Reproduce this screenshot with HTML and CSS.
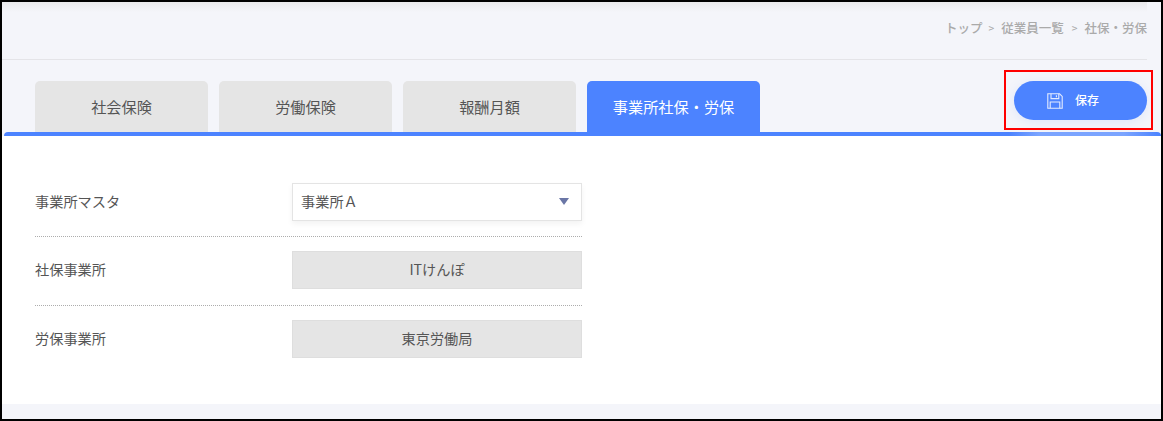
FILE: index.html
```html
<!DOCTYPE html>
<html lang="ja">
<head>
<meta charset="utf-8">
<title>事業所社保・労保</title>
<link rel="stylesheet" href="styles.css">
</head>
<body>
<div class="frame">
  <nav class="crumbs">
    <span>トップ</span><span class="sep">&gt;</span><span>従業員一覧</span><span class="sep">&gt;</span><span>社保・労保</span>
  </nav>
  <div class="toolbar">
    <div class="tabs">
      <div class="tab">社会保険</div>
      <div class="tab">労働保険</div>
      <div class="tab">報酬月額</div>
      <div class="tab active">事業所社保・労保</div>
    </div>
    <div class="save-wrap">
      <button class="save" type="button">
        <svg class="save-icon" width="16" height="16" viewBox="0 0 16 16" fill="none" stroke="#e3ebff" stroke-width="1.1">
          <path d="M.8.8H12.6L15.2 3.4V15.2H.8Z"/>
          <path d="M4 .8V5.6H11.8V.8"/>
          <path d="M9.4 2.2V4.2"/>
          <path d="M3.2 15.2V9H12.8V15.2"/>
        </svg>
        <span>保存</span>
      </button>
    </div>
  </div>
  <div class="bar"></div>
  <main class="panel">
    <div class="row">
      <div class="label">事業所マスタ</div>
      <div class="select"><span>事業所Ａ</span><i class="caret"></i></div>
    </div>
    <div class="row">
      <div class="label">社保事業所</div>
      <div class="field">ITけんぽ</div>
    </div>
    <div class="row">
      <div class="label">労保事業所</div>
      <div class="field">東京労働局</div>
    </div>
  </main>
</div>
</body>
</html>
```
FILE: styles.css
```css
* { box-sizing: border-box; }
html, body { margin: 0; padding: 0; }
body {
  width: 1163px;
  height: 421px;
  overflow: hidden;
  font-family: "Noto Sans CJK JP", "Noto Sans", sans-serif;
  color: #555;
}
.frame {
  width: 1163px;
  height: 421px;
  border: 2px solid #000;
  background: #f4f5fa;
  display: flex;
  flex-direction: column;
}
.crumbs {
  height: 58px;
  margin-right: 14px;
  padding-top: 17px;
  border-bottom: 1px solid #e4e4e8;
  display: flex;
  justify-content: flex-end;
  font-size: 12.5px;
  font-weight: 500;
  line-height: 18px;
  color: #aaa;
  background: linear-gradient(#e9e9ec 0, #f4f5fa 10px);
}
.sep { margin: 0 7px 0 6px; font-size: 10px; }
.sep + span + .sep { margin-left: 8px; }
.toolbar {
  height: 72px;
  padding: 21px 14px 0 33px;
  display: flex;
  justify-content: space-between;
}
.tabs { display: flex; gap: 11px; }
.tab {
  width: 173px;
  height: 51px;
  padding-bottom: 2px;
  background: #e5e5e5;
  border-radius: 5px 5px 0 0;
  display: flex;
  align-items: center;
  justify-content: center;
  font-size: 15.2px;
  color: #555;
}
.tab.active { background: #4c83ff; color: #fff; }
.save-wrap { position: relative; }
.save-wrap::after {
  content: "";
  position: absolute;
  left: -10px;
  right: -6px;
  top: -11px;
  height: 56px;
  border: 2px solid #f00;
  pointer-events: none;
}
.save {
  width: 133px;
  height: 39px;
  padding: 0 0 2px 33px;
  border: 0;
  border-radius: 20px;
  background: #4c83ff;
  color: #fff;
  font: 500 12px "Noto Sans CJK JP", sans-serif;
  display: flex;
  align-items: center;
  gap: 12px;
  box-shadow: 0 2px 12px rgba(76, 131, 255, .12);
}
.save-icon { margin-top: 2px; }
.bar {
  height: 4px;
  margin-left: 2px;
  flex: none;
  border-radius: 4px 4px 0 0;
  background: linear-gradient(90deg, #4c83ff 1005px, #7ba4ff 1035px, #7ba4ff 1120px, #4c83ff 1155px);
}
.panel {
  height: 268px;
  padding: 32.9px 0 0 33px;
  background: #fff;
}
.row {
  width: 547px;
  height: 68.5px;
  padding-top: 14px;
  display: flex;
  align-items: flex-start;
  border-bottom: 1px dotted #adadad;
}
.row:last-child { border-bottom: 0; }
.label { width: 257px; height: 38px; line-height: 37px; font-size: 14.2px; color: #555; }
.select, .field {
  width: 290px;
  height: 38px;
  margin-right: -1px;
  padding-bottom: 2px;
  font-size: 14.2px;
  display: flex;
  align-items: center;
  flex: none;
}
.select {
  padding-left: 8px;
  padding-right: 12px;
  justify-content: space-between;
  background: #fff;
  border: 1px solid #e4e4e4;
  box-shadow: 0 3px 6px rgba(0, 0, 0, .05);
}
.caret {
  width: 0;
  height: 0;
  margin-top: 2px;
  border-left: 5px solid transparent;
  border-right: 5px solid transparent;
  border-top: 7px solid #6a76a6;
}
.field {
  justify-content: center;
  background: #e5e5e5;
  border: 1px solid #dedede;
}
```
